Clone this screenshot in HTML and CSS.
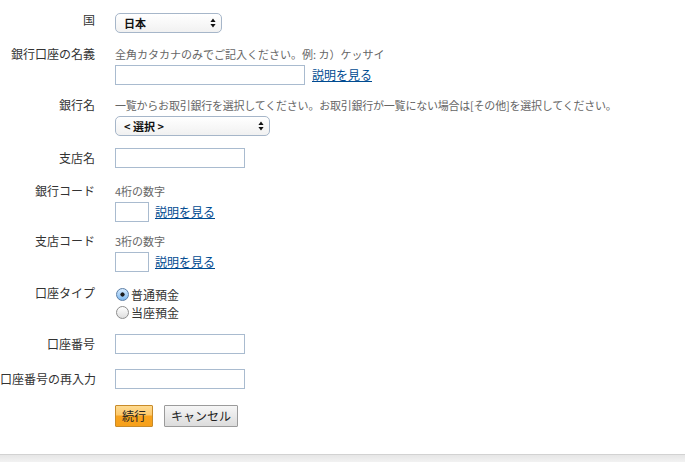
FILE: index.html
```html
<!DOCTYPE html>
<html lang="ja">
<head>
<meta charset="utf-8">
<title>銀行口座の登録</title>
<link rel="stylesheet" href="styles.css">
</head>
<body>
<form class="bank-form">
  <div class="row">
    <div class="label">国</div>
    <div class="field">
      <div class="select-wrap select-country">
        <select class="select"><option>日本</option></select>
        <svg class="select-arrow" width="6" height="10" viewBox="0 0 6 10"><path d="M3 0.5 L5.6 4 H0.4 Z M3 9.5 L5.6 6 H0.4 Z" fill="#111"/></svg>
      </div>
    </div>
  </div>

  <div class="row row-tight">
    <div class="label">銀行口座の名義</div>
    <div class="field">
      <div class="hint">全角カタカナのみでご記入ください。例: カ）ケッサイ</div>
      <div class="inline">
        <input class="text-input w-name" type="text">
        <a class="help-link" href="#">説明を見る</a>
      </div>
    </div>
  </div>

  <div class="row row-tight">
    <div class="label">銀行名</div>
    <div class="field">
      <div class="hint hint-long">一覧からお取引銀行を選択してください。お取引銀行が一覧にない場合は[その他]を選択してください。</div>
      <div class="select-wrap select-bank">
        <select class="select"><option>&lt; 選択 &gt;</option></select>
        <svg class="select-arrow" width="6" height="10" viewBox="0 0 6 10"><path d="M3 0.5 L5.6 4 H0.4 Z M3 9.5 L5.6 6 H0.4 Z" fill="#111"/></svg>
      </div>
    </div>
  </div>

  <div class="row row-plain">
    <div class="label label-input">支店名</div>
    <div class="field">
      <input class="text-input w-mid" type="text">
    </div>
  </div>

  <div class="row row-close">
    <div class="label">銀行コード</div>
    <div class="field">
      <div class="hint">4桁の数字</div>
      <div class="inline inline-short">
        <input class="text-input w-code" type="text">
        <a class="help-link" href="#">説明を見る</a>
      </div>
    </div>
  </div>

  <div class="row">
    <div class="label">支店コード</div>
    <div class="field">
      <div class="hint">3桁の数字</div>
      <div class="inline inline-short">
        <input class="text-input w-code" type="text">
        <a class="help-link" href="#">説明を見る</a>
      </div>
    </div>
  </div>

  <div class="row">
    <div class="label">口座タイプ</div>
    <div class="field">
      <label class="radio"><input type="radio" name="type" checked>普通預金</label>
      <label class="radio"><input type="radio" name="type">当座預金</label>
    </div>
  </div>

  <div class="row row-plain">
    <div class="label label-input">口座番号</div>
    <div class="field">
      <input class="text-input w-mid" type="text">
    </div>
  </div>

  <div class="row row-plain">
    <div class="label label-input">口座番号の再入力</div>
    <div class="field">
      <input class="text-input w-mid" type="text">
    </div>
  </div>

  <div class="row">
    <div class="label"></div>
    <div class="field buttons">
      <button class="btn btn-primary" type="submit">続行</button>
      <button class="btn btn-secondary" type="button">キャンセル</button>
    </div>
  </div>
</form>
<div class="footer"></div>
</body>
</html>
```

FILE: styles.css
```css
html, body {
  margin: 0;
  padding: 0;
  background: #ffffff;
}

body {
  font-family: "Noto Sans CJK JP", "Liberation Sans", sans-serif;
  color: #333333;
  font-size: 12px;
  height: 462px;
  overflow: hidden;
  display: flex;
  flex-direction: column;
}

.bank-form {
  padding-top: 12px;
  flex: 1;
}

/* one label/field pair */
.row {
  display: grid;
  grid-template-columns: 95px 1fr;
  column-gap: 20px;
  margin-bottom: 13px;
}

.row-tight {
  margin-bottom: 12px;
}

.row-close {
  margin-bottom: 11px;
}

.row-plain {
  margin-bottom: 15px;
}

.label {
  text-align: right;
  font-size: 12px;
  line-height: 16px;
  color: #333333;
  white-space: nowrap;
}

.label-input {
  padding-top: 2px;
}

.field {
  display: flex;
  flex-direction: column;
  align-items: flex-start;
}

.hint {
  font-size: 11px;
  line-height: 17px;
  color: #666666;
  margin-bottom: 2px;
  white-space: nowrap;
}

.hint-long {
  letter-spacing: -0.22px;
}

.inline {
  display: flex;
  align-items: center;
  gap: 7px;
}

.inline-short {
  gap: 6px;
}

.text-input {
  box-sizing: border-box;
  height: 20px;
  border: 1px solid #a9bbcf;
  background: #ffffff;
  padding: 0 3px;
  margin: 0;
  font: inherit;
  outline: none;
}

.w-name { width: 190px; }
.w-mid  { width: 130px; }
.w-code { width: 34px; }

.help-link {
  color: #004b91;
  text-decoration: underline;
  font-size: 12px;
  line-height: 16px;
}

/* mac-style popup menu */
.select-wrap {
  position: relative;
  height: 20px;
}

.select-country { width: 107px; margin-top: 1px; }
.select-bank { width: 155px; }

.select {
  appearance: none;
  -webkit-appearance: none;
  box-sizing: border-box;
  width: 100%;
  height: 20px;
  margin: 0;
  padding: 0 0 0 8px;
  border: 1px solid #a6b6c9;
  border-radius: 5px;
  background: linear-gradient(#ffffff, #f1f1f1);
  font-family: inherit;
  font-size: 11px;
  font-weight: bold;
  color: #111111;
  line-height: 18px;
  outline: none;
}

.select-arrow {
  position: absolute;
  right: 6px;
  top: 5px;
  pointer-events: none;
}

/* radio choices */
.radio {
  display: flex;
  align-items: center;
  height: 18px;
  font-size: 12px;
  color: #333333;
}

.radio input {
  appearance: none;
  -webkit-appearance: none;
  box-sizing: border-box;
  width: 13px;
  height: 13px;
  margin: 0 2px 0 1px;
  border: 1px solid #8d8d8d;
  border-radius: 50%;
  background: linear-gradient(#ffffff, #dedede);
}

.radio input:checked {
  border-color: #5b7ea6;
  background:
    radial-gradient(circle, #1b1b1b 0 1.8px, transparent 2.4px),
    linear-gradient(#d6ebff, #7db7ee);
}

/* form buttons */
.buttons {
  flex-direction: row;
  gap: 11px;
  padding-top: 1px;
}

.btn {
  box-sizing: border-box;
  height: 22px;
  margin: 0;
  padding: 0 5px;
  font-family: inherit;
  font-size: 12px;
  line-height: 20px;
  color: #222222;
  border-radius: 1px;
  cursor: pointer;
}

.btn-primary {
  width: 38px;
  border: 1px solid #c88b2a;
  background: linear-gradient(#fedb91 0%, #fdc86a 45%, #f8a31e 50%, #f6a01a 100%);
}

.btn-secondary {
  width: 74px;
  border: 1px solid #9b9b9b;
  background: linear-gradient(#f6f6f6, #dcdcdc);
}

.footer {
  height: 7px;
  border-top: 1px solid #d2d2d2;
  background: linear-gradient(#e6e6e6, #f2f2f2);
}
```
